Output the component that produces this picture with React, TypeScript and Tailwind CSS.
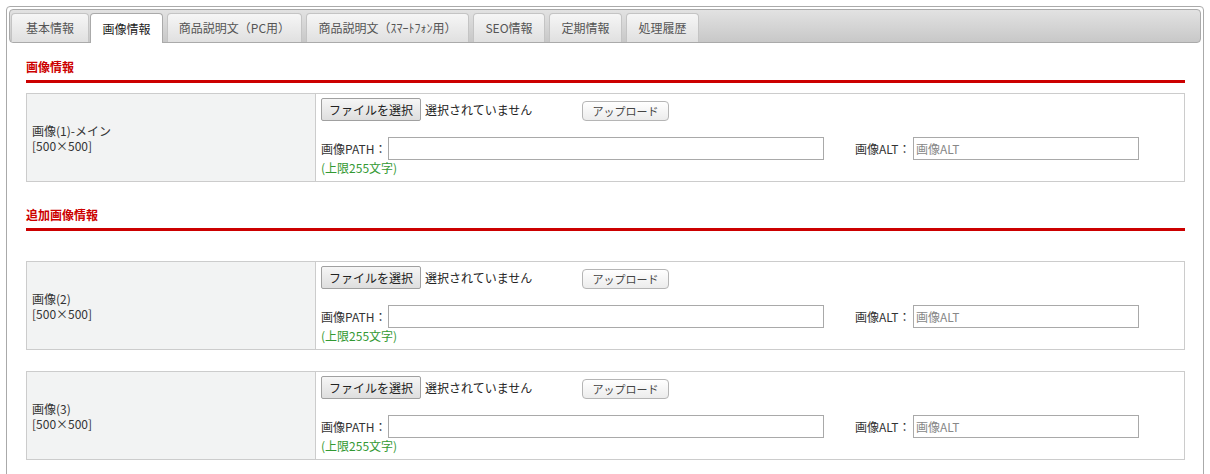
import React from 'react';

const tabs = [
  { label: '基本情報', w: 'w-[78px]' },
  { label: '画像情報', w: 'w-[73px] -ml-[3px]', active: true },
  { label: '商品説明文（PC用）', w: 'w-[135px]' },
  { label: '商品説明文（ｽﾏｰﾄﾌｫﾝ用）', w: 'w-[163px]' },
  { label: 'SEO情報', w: 'w-[72px]' },
  { label: '定期情報', w: 'w-[73px]' },
  { label: '処理履歴', w: 'w-[73px]' },
];

function ImageRow({ label }: { label: string }) {
  return (
    <div className="flex border border-[#cccccc] h-[89px]">
      <div className="w-[289px] shrink-0 bg-[#f2f3f3] border-r border-[#cccccc] flex flex-col justify-center pl-[5px] leading-[15px] text-[12px] text-[#333]">
        <div>{label}</div>
        <div>[500×500]</div>
      </div>
      <div className="flex-1 pt-[4px] pl-[5px]">
        <div className="flex items-end h-[23px]">
          <div className="w-[261px] flex items-center">
            <button className="h-[23px] w-[100px] border border-[#a0a0a0] rounded-[2px] bg-gradient-to-b from-[#f6f6f6] to-[#dedede] text-[12px] text-[#222]">
              ファイルを選択
            </button>
            <span className="ml-[4px] text-[12px] text-[#222]">選択されていません</span>
          </div>
          <button className="h-[20px] w-[87px] border border-[#b5b5b5] rounded-[4px] bg-gradient-to-b from-[#ffffff] to-[#ececec] text-[11px] text-[#444]">
            アップロード
          </button>
        </div>
        <div className="flex items-center mt-[16px] h-[23px] text-[12px] text-[#333]">
          <span className="w-[67px]">画像PATH：</span>
          <div className="w-[436px] h-[23px] border border-[#a9a9a9] bg-white" />
          <span className="ml-[31px] w-[58px]">画像ALT：</span>
          <div className="w-[226px] h-[23px] border border-[#a9a9a9] bg-white flex items-center pl-[2px] text-[#888]">
            画像ALT
          </div>
        </div>
        <div className="leading-[16px] text-[12px] text-[#339933]">(上限255文字)</div>
      </div>
    </div>
  );
}

function Heading({ text, className }: { text: string; className?: string }) {
  return (
    <div className={`${className ?? ''} pb-[4px] border-b-[3px] border-[#cc0000]`}>
      <h3 className="leading-[18px] text-[12px] font-bold text-[#cc0000]">{text}</h3>
    </div>
  );
}

export default function App() {
  return (
    <div
      className="bg-white min-h-screen pt-[6px] pl-[6px] pr-[6px]"
      style={{ fontFamily: '"Noto Sans CJK JP", "Noto Sans", sans-serif' }}
    >
      <div className="w-[1198px] h-[520px] border border-[#aaaaaa] rounded-[4px] p-[2px]">
        {/* Tabs */}
        <div className="flex items-end gap-[4px] h-[34px] pl-[1px] border border-[#aaaaaa] rounded-[4px] bg-gradient-to-b from-[#e2e2e2] to-[#c8c8c8]">
          {tabs.map((t) => (
            <div
              key={t.label}
              className={`${t.w} h-[29px] flex items-center justify-center rounded-t-[4px] border border-b-0 text-[12px] ${
                t.active
                  ? 'bg-white border-[#aaaaaa] text-[#222] h-[30px] -mb-px'
                  : 'bg-gradient-to-b from-[#f6f6f6] to-[#e0e0e0] border-[#c4c4c4] text-[#555]'
              }`}
            >
              {t.label}
            </div>
          ))}
        </div>

        <div className="pl-[17px] pr-[16px]">
          <Heading text="画像情報" className="mt-[15px]" />
          <div className="mt-[10px]">
            <ImageRow label="画像(1)-メイン" />
          </div>

          <Heading text="追加画像情報" className="mt-[24px]" />
          <div className="mt-[30px]">
            <ImageRow label="画像(2)" />
          </div>
          <div className="mt-[21px]">
            <ImageRow label="画像(3)" />
          </div>
        </div>
      </div>
    </div>
  );
}
